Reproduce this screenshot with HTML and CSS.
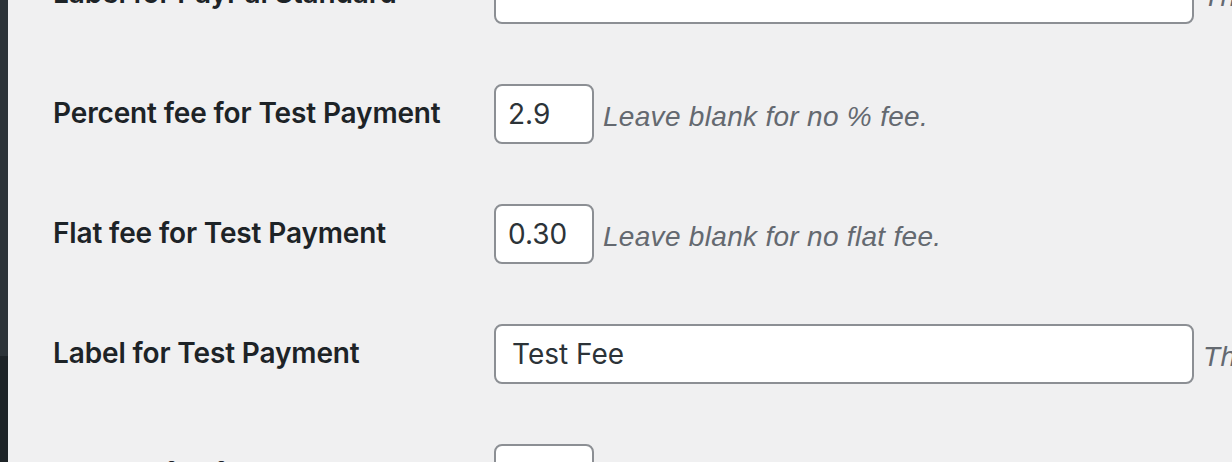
FILE: index.html
```html
<!DOCTYPE html>
<html lang="en">
<head>
<meta charset="utf-8">
<title>Payment fees settings</title>
<link rel="stylesheet" href="styles.css">
</head>
<body>
<div class="layout">
  <aside class="sidebar">
    <div class="sidebar-top"></div>
    <div class="sidebar-bottom"></div>
  </aside>
  <main class="content">
    <div class="form">
      <div class="row">
        <label class="label">Label for PayPal Standard</label>
        <div class="field">
          <input class="text-input wide" type="text" value="">
          <span class="desc">Th</span>
        </div>
      </div>
      <div class="row">
        <label class="label">Percent fee for Test Payment</label>
        <div class="field">
          <input class="text-input small" type="text" value="2.9">
          <span class="desc">Leave blank for no % fee.</span>
        </div>
      </div>
      <div class="row">
        <label class="label">Flat fee for Test Payment</label>
        <div class="field">
          <input class="text-input small" type="text" value="0.30">
          <span class="desc">Leave blank for no flat fee.</span>
        </div>
      </div>
      <div class="row">
        <label class="label">Label for Test Payment</label>
        <div class="field">
          <input class="text-input wide" type="text" value="Test Fee">
          <span class="desc">Th</span>
        </div>
      </div>
      <div class="row">
        <label class="label">Percent fee for PayPal Standard</label>
        <div class="field">
          <input class="text-input small" type="text" value="">
          <span class="desc">Leave blank for no % fee.</span>
        </div>
      </div>
    </div>
  </main>
</div>
</body>
</html>
```

FILE: styles.css
```css
html, body {
  margin: 0;
  padding: 0;
  height: 100%;
  overflow: hidden;
  background: #f0f0f1;
}

.layout {
  display: flex;
  height: 462px;
  font-family: Inter, "Noto Sans", "Liberation Sans", sans-serif;
}

.sidebar {
  width: 8px;
  flex: 0 0 8px;
  display: flex;
  flex-direction: column;
}

.sidebar-top {
  height: 356px;
  background: #2c3338;
}

.sidebar-bottom {
  flex: 1;
  background: #1d2327;
}

.content {
  flex: 1;
  padding-left: 45px;
  overflow: hidden;
}

.form {
  margin-top: -66px;
  display: flex;
  flex-direction: column;
}

.row {
  display: flex;
  height: 120px;
  box-sizing: border-box;
}

.label {
  width: 441px;
  flex: 0 0 441px;
  padding-top: 41px;
  font-size: 28px;
  line-height: 36px;
  font-weight: 600;
  letter-spacing: -0.14px;
  color: #1d2327;
  white-space: nowrap;
}

.field {
  display: flex;
  align-items: center;
  padding-top: 30px;
  height: 60px;
}

.text-input {
  box-sizing: border-box;
  height: 60px;
  border: 2px solid #8c8f94;
  border-radius: 8px;
  background: #fff;
  font-family: Inter, "Noto Sans", "Liberation Sans", sans-serif;
  font-size: 28px;
  color: #2c3338;
  outline: none;
  margin: 0;
}

.text-input.small {
  width: 100px;
  padding: 0 12px;
}

.text-input.wide {
  width: 700px;
  padding: 0 16px;
}

.desc {
  margin-left: 9px;
  font-family: "Liberation Sans", Arial, sans-serif;
  font-size: 28px;
  font-style: italic;
  letter-spacing: 0.3px;
  color: #646970;
  white-space: nowrap;
  padding-top: 5px;
}
```
